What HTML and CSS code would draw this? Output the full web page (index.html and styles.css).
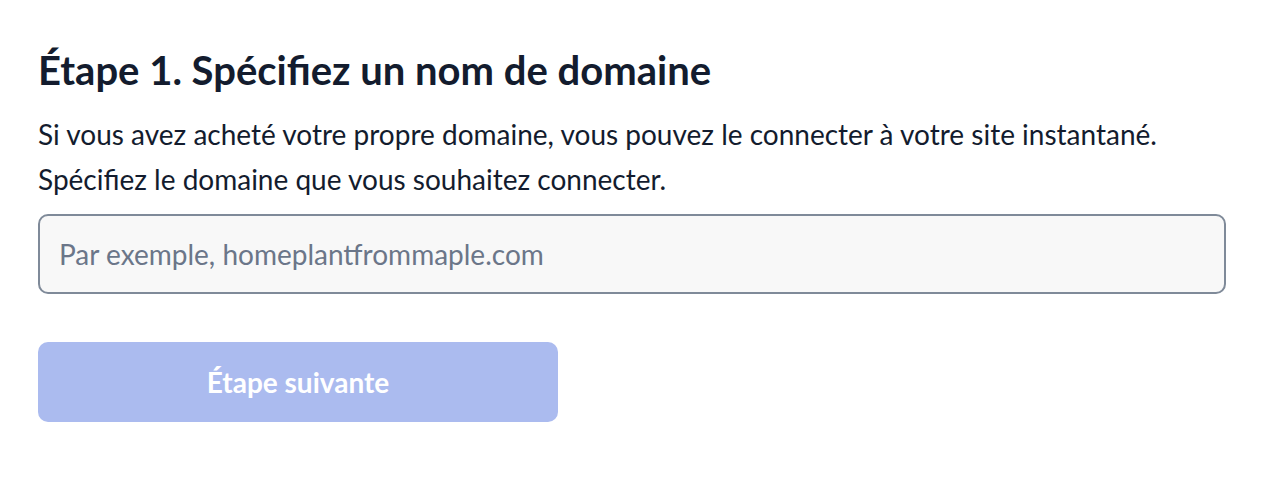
FILE: index.html
```html
<!DOCTYPE html>
<html lang="fr">
<head>
    <meta charset="UTF-8">
    <title>Étape 1</title>
    <link rel="stylesheet" href="styles.css">
</head>
<body>
    <div class="step">
        <h1 class="step-title">Étape 1. Spécifiez un nom de domaine</h1>
        <p class="step-text">
            Si vous avez acheté votre propre domaine, vous pouvez le connecter à votre site instantané.<br>
            Spécifiez le domaine que vous souhaitez connecter.
        </p>
        <input type="text" class="domain-input" placeholder="Par exemple, homeplantfrommaple.com">
        <button class="next-button" disabled>Étape suivante</button>
    </div>
</body>
</html>
```

FILE: styles.css
```css
body {
    margin: 0;
    font-family: Lato, "Liberation Sans", sans-serif;
    background-color: #fff;
    color: #131c2e;
}
.step {
    padding: 44px 36px 0 38px;
    display: flex;
    flex-direction: column;
    align-items: flex-start;
}
.step-title {
    margin: 0;
    font-size: 40px;
    font-weight: 700;
    line-height: 52px;
}
.step-text {
    margin: 16px 0 0;
    font-size: 28px;
    line-height: 45px;
}
.domain-input {
    box-sizing: border-box;
    width: 100%;
    height: 80px;
    margin-top: 12px;
    padding: 0 19px;
    border: 2px solid #7f8a99;
    border-radius: 10px;
    background-color: #f8f8f8;
    font-family: inherit;
    font-size: 28px;
    color: #131c2e;
}
.domain-input::placeholder {
    color: #6b7689;
}
.next-button {
    width: 520px;
    height: 80px;
    margin-top: 48px;
    border: none;
    border-radius: 10px;
    background-color: #abbbef;
    color: #fff;
    font-family: inherit;
    font-size: 28px;
    font-weight: 700;
}
```
